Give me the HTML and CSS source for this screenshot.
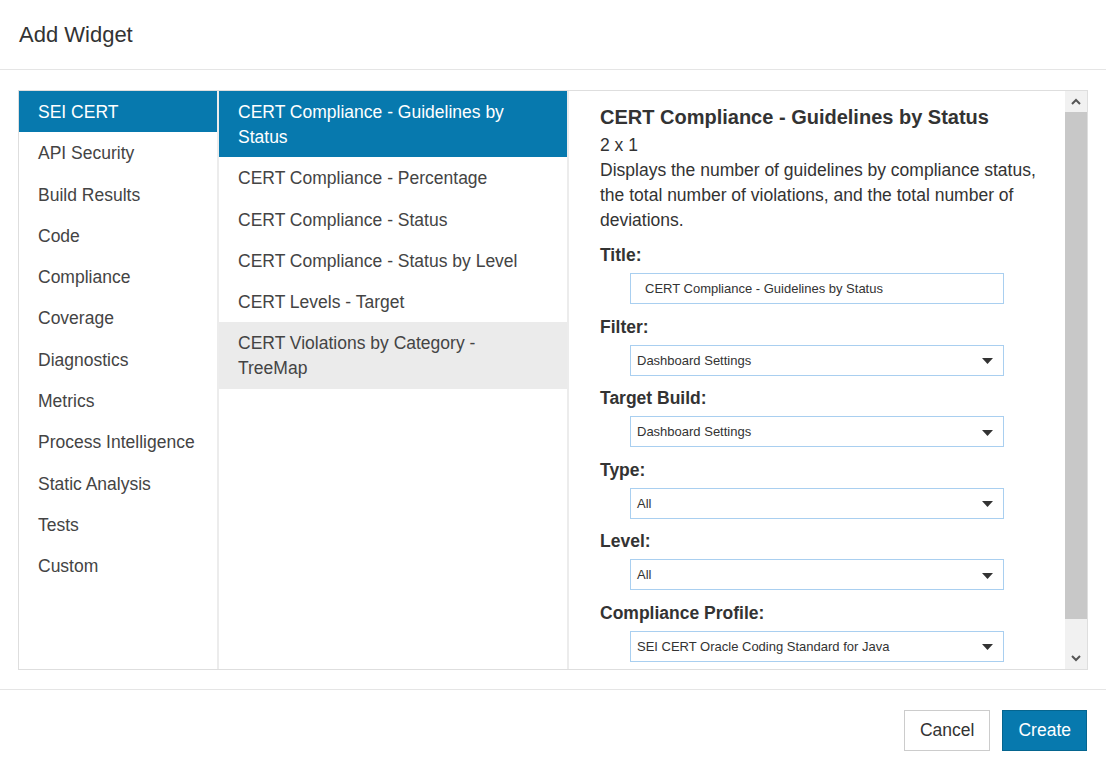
FILE: index.html
```html
<!DOCTYPE html>
<html lang="en">
<head>
  <meta charset="UTF-8" />
  <title>Add Widget</title>
  <link rel="stylesheet" href="styles.css">
</head>
<body>
  <div class="modal">
    <header class="modal-header">
      <h3>Add Widget</h3>
    </header>

    <div class="modal-body">
      <div class="picker">
        <ul class="category-list">
          <li class="active">SEI CERT</li>
          <li>API Security</li>
          <li>Build Results</li>
          <li>Code</li>
          <li>Compliance</li>
          <li>Coverage</li>
          <li>Diagnostics</li>
          <li>Metrics</li>
          <li>Process Intelligence</li>
          <li>Static Analysis</li>
          <li>Tests</li>
          <li>Custom</li>
        </ul>

        <ul class="widget-list">
          <li class="active">CERT Compliance - Guidelines by Status</li>
          <li>CERT Compliance - Percentage</li>
          <li>CERT Compliance - Status</li>
          <li>CERT Compliance - Status by Level</li>
          <li>CERT Levels - Target</li>
          <li class="hover">CERT Violations by Category - TreeMap</li>
        </ul>

        <div class="details">
          <div class="details-content">
            <h4 class="details-title">CERT Compliance - Guidelines by Status</h4>
            <div class="details-size">2 x 1</div>
            <p class="details-desc">Displays the number of guidelines by compliance status, the total number of violations, and the total number of deviations.</p>

            <div class="form-group">
              <label>Title:</label>
              <div class="field text-field">CERT Compliance - Guidelines by Status</div>
            </div>
            <div class="form-group">
              <label>Filter:</label>
              <div class="field select-field">
                <span>Dashboard Settings</span>
                <svg class="caret" width="11" height="6" viewBox="0 0 11 6"><path d="M0 0 H11 L5.5 6 Z" fill="#333"/></svg>
              </div>
            </div>
            <div class="form-group">
              <label>Target Build:</label>
              <div class="field select-field">
                <span>Dashboard Settings</span>
                <svg class="caret" width="11" height="6" viewBox="0 0 11 6"><path d="M0 0 H11 L5.5 6 Z" fill="#333"/></svg>
              </div>
            </div>
            <div class="form-group">
              <label>Type:</label>
              <div class="field select-field">
                <span>All</span>
                <svg class="caret" width="11" height="6" viewBox="0 0 11 6"><path d="M0 0 H11 L5.5 6 Z" fill="#333"/></svg>
              </div>
            </div>
            <div class="form-group">
              <label>Level:</label>
              <div class="field select-field">
                <span>All</span>
                <svg class="caret" width="11" height="6" viewBox="0 0 11 6"><path d="M0 0 H11 L5.5 6 Z" fill="#333"/></svg>
              </div>
            </div>
            <div class="form-group">
              <label>Compliance Profile:</label>
              <div class="field select-field">
                <span>SEI CERT Oracle Coding Standard for Java</span>
                <svg class="caret" width="11" height="6" viewBox="0 0 11 6"><path d="M0 0 H11 L5.5 6 Z" fill="#333"/></svg>
              </div>
            </div>
          </div>

          <div class="scrollbar">
            <div class="scroll-btn">
              <svg width="10" height="7" viewBox="0 0 10 7"><path d="M1 6 L5 2 L9 6" fill="none" stroke="#555" stroke-width="2"/></svg>
            </div>
            <div class="scroll-track">
              <div class="scroll-thumb"></div>
            </div>
            <div class="scroll-btn">
              <svg width="10" height="7" viewBox="0 0 10 7"><path d="M1 1 L5 5 L9 1" fill="none" stroke="#555" stroke-width="2"/></svg>
            </div>
          </div>
        </div>
      </div>
    </div>

    <footer class="modal-footer">
      <button class="btn">Cancel</button>
      <button class="btn btn-primary">Create</button>
    </footer>
  </div>
</body>
</html>
```

FILE: styles.css
```css
* {
  margin: 0;
  padding: 0;
  box-sizing: border-box;
  font-family: "Liberation Sans", Arial, sans-serif;
}

body {
  background-color: #fff;
  color: #333;
  font-size: 17.5px;
  line-height: 25px;
}

.modal-header {
  height: 70px;
  padding: 22px 19px;
  border-bottom: 1px solid #e5e5e5;
}

.modal-header h3 {
  font-size: 22px;
  font-weight: normal;
  line-height: 25px;
  color: #333;
}

.modal-body {
  padding: 20px 18px 19px;
}

.picker {
  display: flex;
  height: 580px;
  border: 1px solid #dedede;
}

.category-list,
.widget-list {
  list-style: none;
  border-right: 2px solid #ececec;
}

.category-list {
  width: 200px;
}

.widget-list {
  width: 350px;
}

.category-list li,
.widget-list li {
  padding: 9px 19px 7.3px;
  color: #444;
  cursor: pointer;
}

.category-list li.active,
.widget-list li.active {
  background-color: #0779ae;
  color: #fff;
}

.widget-list li.hover {
  background-color: #ebebeb;
}

.details {
  flex: 1;
  display: flex;
  overflow: hidden;
}

.details-content {
  flex: 1;
  padding: 14px 16px 0 31px;
  overflow: hidden;
}

.details-title {
  font-size: 20px;
  font-weight: bold;
  line-height: 25px;
  margin-bottom: 3px;
}

.details-desc {
  margin-bottom: 11px;
}

.form-group {
  margin-bottom: 11.6px;
}

.form-group label {
  display: block;
  font-weight: bold;
  line-height: 22px;
  margin-bottom: 7px;
}

.field {
  margin-left: 30px;
  width: 374px;
  height: 31px;
  border: 1px solid #a9cff0;
  font-size: 13px;
  line-height: 29px;
  color: #333;
}

.text-field {
  padding-left: 14px;
}

.select-field {
  display: flex;
  align-items: center;
  justify-content: space-between;
  padding: 0 10px 0 6px;
}

.caret {
  margin-top: 2px;
}

.scrollbar {
  width: 22px;
  display: flex;
  flex-direction: column;
  background-color: #f1f1f1;
}

.scroll-btn {
  height: 21px;
  display: flex;
  align-items: center;
  justify-content: center;
}

.scroll-track {
  flex: 1;
}

.scroll-thumb {
  height: 507px;
  background-color: #c8c8c8;
}

.modal-footer {
  border-top: 1px solid #e5e5e5;
  padding: 20px 19px;
  display: flex;
  justify-content: flex-end;
  gap: 12px;
}

.btn {
  font-size: 17.5px;
  line-height: 25px;
  padding: 7px 15px;
  border: 1px solid #ccc;
  background-color: #fff;
  color: #333;
  cursor: pointer;
}

.btn-primary {
  background-color: #0779ae;
  border-color: #05658f;
  color: #fff;
}
```
